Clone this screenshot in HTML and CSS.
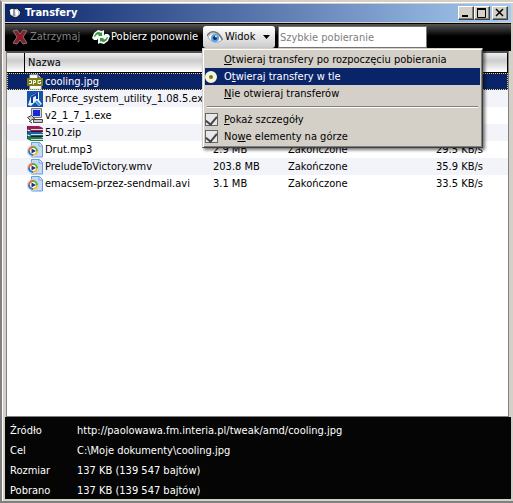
FILE: index.html
```
<!DOCTYPE html>
<html lang="pl">
<head>
<meta charset="utf-8">
<title>Transfery</title>
<link rel="stylesheet" href="styles.css">
</head>
<body>
<svg class="defs" aria-hidden="true">
  <symbol id="media" viewBox="0 0 16 16">
    <path d="M4.500 .5h8l3 3v11.500h-11z" fill="#c4dcf8" stroke="#6c9cdc"/>
    <path d="M12 1v3h3" fill="#fff" stroke="#6c9cdc"/>
    <circle cx="6" cy="9" r="5.700" fill="#fff" stroke="#a4b8d4" stroke-width=".6"/>
    <path d="M2 9a4 4 0 0 1 4-4" fill="none" stroke="#e8642c" stroke-width="2"/>
    <path d="M6 5a4 4 0 0 1 4 4" fill="none" stroke="#5cae3c" stroke-width="2"/>
    <path d="M10 9a4 4 0 0 1-4 4" fill="none" stroke="#f4b428" stroke-width="2"/>
    <path d="M6 13a4 4 0 0 1-4-4" fill="none" stroke="#2c74d4" stroke-width="2"/>
    <path d="M4.500 6.500L9 9l-4.500 2.500z" fill="#123c6c"/>
  </symbol>
</svg>
<main class="window">
  <header class="titlebar">
    <svg class="app-icon" viewBox="0 0 14 12" aria-hidden="true"><path d="M1 3l3-2 2 1 3-1 4 4-1 3-4 3-3-1-3-2z" fill="#c8ccd4" stroke="#101828"/><path d="M2 3l3-1v5l-2 1zM7 3l3 1v4l-2 1z" fill="#fff"/><path d="M6 3v6" stroke="#586070"/></svg>
    <h1>Transfery</h1>
    <div class="caption-buttons">
      <button type="button" aria-label="Minimalizuj"><svg viewBox="0 0 12 10"><path d="M2 8h6" stroke="#000" stroke-width="2"/></svg></button>
      <button type="button" aria-label="Maksymalizuj"><svg viewBox="0 0 12 10"><path d="M1.500 1v8.500h8V1" fill="none" stroke="#000"/><path d="M1 1h9" stroke="#000" stroke-width="2"/></svg></button>
      <button type="button" class="close" aria-label="Zamknij"><svg viewBox="0 0 12 10"><path d="M2 1l7 7M9 1L2 8" stroke="#000" stroke-width="1.500"/></svg></button>
    </div>
  </header>
  <div class="toolbar">
    <button type="button" class="tool stop" disabled><svg viewBox="0 0 16 16" aria-hidden="true"><path d="M1 2l4-1 3 4 3-4 4 1-4 6 4 6-4 1-3-4-3 4-4-1 4-6z" fill="#8c1c28" stroke="#777"/></svg><span>Zatrzymaj</span></button>
    <button type="button" class="tool again"><svg viewBox="0 0 18 16" aria-hidden="true"><path d="M0 9l2-5 4-3 4 1 2-1v7H7l-2 3H2zM18 7l-2 5-4 3-4-1-2 1V8h5l2-3h3z" fill="#f4faf4"/><path d="M2 8c1-5 5-6 7-4l1-1v4H6l1-1c-2-1-3 0-4 2zM16 8c-1 5-5 6-7 4l-1 1V9h4l-1 1c2 1 3 0 4-2z" fill="#3c9444"/></svg><span>Pobierz ponownie</span></button>
    <div class="view">
      <button type="button" class="view-button" aria-haspopup="menu" aria-expanded="true"><svg class="eye" viewBox="0 0 16 14" aria-hidden="true"><path d="M1 7c3-5 10-6 14 3-5 4-11 3-14-3z" fill="#fff" stroke="#a8a8b0"/><circle cx="8" cy="8" r="4" fill="#4ca4f0"/><circle cx="8" cy="8" r="2" fill="#103050"/><circle cx="9" cy="6.500" r="1" fill="#e0f4ff"/><path d="M0 6c4-7 12-5 15.500 4" fill="none" stroke="#777" stroke-width="1.500"/></svg><span>Widok</span><svg class="arrow" viewBox="0 0 7 4" aria-hidden="true"><path d="M0 0h7L3.500 4z"/></svg></button>
      <div class="menu" role="menu">
        <button type="button" role="menuitemradio" aria-checked="false"><span class="mark"></span><span><u>O</u>twieraj transfery po rozpoczęciu pobierania</span></button>
        <button type="button" role="menuitemradio" aria-checked="true" class="active"><span class="mark"><i class="radio"></i></span><span>O<u>t</u>wieraj transfery w tle</span></button>
        <button type="button" role="menuitemradio" aria-checked="false"><span class="mark"></span><span><u>N</u>ie otwieraj transferów</span></button>
        <hr>
        <label><span class="mark"><input type="checkbox" checked></span><span><u>P</u>okaż szczegóły</span></label>
        <label><span class="mark"><input type="checkbox" checked></span><span>No<u>w</u>e elementy na górze</span></label>
      </div>
    </div>
    <input class="quick" type="text" placeholder="Szybkie pobieranie" aria-label="Szybkie pobieranie">
  </div>
  <section class="list">
    <table>
      <colgroup><col class="c-icon"><col class="c-name"><col class="c-size"><col class="c-state"><col></colgroup>
      <thead><tr><th></th><th>Nazwa</th><th></th><th></th><th></th></tr></thead>
      <tbody>
        <tr class="selected"><td></td><td><div class="file"><svg viewBox="0 0 16 16" aria-hidden="true"><path d="M3 1h8l3 3v11H3z" fill="#fff" stroke="#ddd"/><path d="M11 1v3h3" fill="#ccc" stroke="#333"/><path d="M0 4h16v8H0z" fill="#7c8010"/><path d="M2 6.500h2.500v3H2M6.500 10.500v-4h2v2h-2M14 6.500h-3v3h2.500V8" fill="none" stroke="#fff"/></svg>cooling.jpg</div></td><td></td><td></td><td></td></tr>
        <tr><td></td><td><div class="file"><svg viewBox="0 0 16 16" aria-hidden="true"><path d="M0 0h16v16H0z" fill="#1454a8"/><path d="M1 14L4 5 12 1v8l3 4-3 2-4-4-4 4z" fill="#e4f4ff"/><path d="M5 12V6l5-3v5" fill="none" stroke="#1838a0" stroke-width="2"/><path d="M9 10l4 4" stroke="#3c94dc" stroke-width="2"/></svg>nForce_system_utility_1.08.5.exe</div></td><td></td><td></td><td></td></tr>
        <tr><td></td><td><div class="file"><svg viewBox="0 0 16 16" aria-hidden="true"><path d="M4.500 .5h10v9h-10z" fill="#d4d4d4" stroke="#777"/><path d="M6 2h7v6H6z" fill="#1828d8"/><path d="M.5 9.500l4-2 3 3-4 2zM6.500 11.500h9v3h-9z" fill="#ccc" stroke="#444"/><path d="M2 13l3 2" stroke="#222"/></svg>v2_1_7_1.exe</div></td><td></td><td></td><td></td></tr>
        <tr><td></td><td><div class="file"><svg viewBox="0 0 16 16" aria-hidden="true"><path d="M0 1h12l4 2v3H4L0 4z" fill="#a01858"/><path d="M0 6h12l4 2v3H4L0 9z" fill="#1860a0"/><path d="M0 11h12l4 2v3H4l-4-2z" fill="#188048"/><path d="M4 4.500h12M4 9.500h12M4 14.500h12" stroke="#ddd"/><path d="M4 6.500h12M4 11.500h12M0 1v13" stroke="#222"/></svg>510.zip</div></td><td></td><td></td><td></td></tr>
        <tr><td></td><td><div class="file"><svg aria-hidden="true"><use href="#media"/></svg>Drut.mp3</div></td><td>2.9 MB</td><td>Zakończone</td><td>29.5 KB/s</td></tr>
        <tr><td></td><td><div class="file"><svg aria-hidden="true"><use href="#media"/></svg>PreludeToVictory.wmv</div></td><td>203.8 MB</td><td>Zakończone</td><td>35.9 KB/s</td></tr>
        <tr><td></td><td><div class="file"><svg aria-hidden="true"><use href="#media"/></svg>emacsem-przez-sendmail.avi</div></td><td>3.1 MB</td><td>Zakończone</td><td>33.5 KB/s</td></tr>
      </tbody>
    </table>
  </section>
  <dl class="details">
    <dt>Źródło</dt><dd>http://paolowawa.fm.interia.pl/tweak/amd/cooling.jpg</dd>
    <dt>Cel</dt><dd>C:\Moje dokumenty\cooling.jpg</dd>
    <dt>Rozmiar</dt><dd>137 KB (139 547 bajtów)</dd>
    <dt>Pobrano</dt><dd>137 KB (139 547 bajtów)</dd>
  </dl>
</main>
</body>
</html>
```

FILE: styles.css
```
* { box-sizing: border-box; }
body, button, input {
  font: 11px/14px "DejaVu Sans Condensed", "Liberation Sans", sans-serif;
  color: #000;
}
body { margin: 0; background: #d4d0c8; }
button { padding: 0; border: 0; background: none; text-align: left; }
svg { display: block; flex: none; }
.defs { position: absolute; width: 0; height: 0; }

.window {
  display: flex;
  flex-direction: column;
  min-height: 100vh;
  padding: 2px 2px 2px 3px;
  border: 2px solid;
  border-color: #d4d0c8 #d4d0c8 #808080 #808080;
  border-right-width: 0;
  background: #d4d0c8;
  box-shadow: inset 1px 1px #fff;
}

.titlebar {
  display: flex;
  align-items: center;
  gap: 3px;
  height: 18px;
  margin-bottom: 1px;
  padding: 0 3px;
  background: linear-gradient(90deg, #0a246a, #a6caf0);
}
.app-icon { width: 14px; height: 12px; }
h1 { flex: 1; margin: 0; font-size: 11px; line-height: 14px; color: #fff; }
.caption-buttons { display: flex; }
.caption-buttons button {
  width: 16px;
  height: 14px;
  padding: 1px;
  border: 1px solid;
  border-color: #fff #404040 #404040 #fff;
  background: #d4d0c8;
  box-shadow: inset -1px -1px #808080;
}
.caption-buttons svg { width: 12px; height: 10px; }
.caption-buttons .close { margin-left: 2px; }

.toolbar {
  display: flex;
  height: 28px;
  padding: 2px 2px 0 7px;
  border-top: 1px solid #000;
  background: linear-gradient(#555, #000 12px);
}
.tool { display: flex; align-items: center; gap: 2px; height: 22px; color: #fff; white-space: nowrap; }
.tool svg { width: 18px; height: 16px; }
.tool.stop { width: 68px; margin-right: 12px; color: #808080; }
.tool.stop svg { width: 16px; }
.tool.again { width: 111px; gap: 1px; }
.view { position: relative; }
.view-button {
  display: flex;
  align-items: center;
  gap: 2px;
  width: 72px;
  height: 22px;
  padding-left: 4px;
  border-radius: 3px;
  background: linear-gradient(#fff, #ccc);
}
.eye { width: 16px; height: 14px; }
.arrow { width: 7px; height: 4px; margin-left: 6px; }
.quick {
  width: 149px;
  height: 22px;
  margin-left: 3px;
  padding: 0 1px;
  border: 1px solid #777;
  background: #fff;
}
.quick::placeholder { color: #808080; opacity: 1; }

.menu {
  position: absolute;
  z-index: 1;
  top: 22px;
  left: -1px;
  width: 281px;
  padding: 2px;
  border: 1px solid;
  border-color: #d4d0c8 #404040 #404040 #d4d0c8;
  background: #d4d0c8;
  box-shadow: inset 1px 1px #fff, inset -1px -1px #808080, 2px 2px 3px #0008;
}
.menu button, .menu label { display: flex; align-items: center; width: 100%; height: 17px; white-space: nowrap; }
.mark { flex: none; width: 19px; }
.menu .active { color: #fff; background: #0a246a; }
.radio {
  display: block;
  width: 12px;
  height: 12px;
  border: 4px solid #f4f4dc;
  border-radius: 50%;
  background: #777720;
}
.menu hr { height: 2px; margin: 4px 2px 3px; border: 0; border-top: 1px solid #808080; background: #fff; }
.menu input {
  appearance: none;
  display: block;
  width: 13px;
  height: 13px;
  margin: 0;
  border: 1px solid #666;
  background: #e8e8e8;
}
.menu input:checked::before {
  content: "";
  display: block;
  width: 5px;
  height: 9px;
  margin: 0 auto;
  border: solid #444;
  border-width: 0 2px 2px 0;
  transform: rotate(40deg);
}

.list {
  flex: 1;
  margin: 0 2px 0 1px;
  border: 1px solid #808080;
  border-top: 2px solid #505050;
  background: #fff;
}
table { width: 100%; table-layout: fixed; border-collapse: separate; border-spacing: 0; }
.c-icon { width: 18px; }
.c-name { width: 186px; }
.c-size { width: 75px; }
.c-state { width: 148px; }
th, td { padding: 0 2px; text-align: left; font-weight: normal; white-space: nowrap; }
th {
  height: 20px;
  padding-left: 3px;
  border: solid #000;
  border-width: 0 1px 1px 0;
  background: linear-gradient(#eee, #ccc 40%, #fff);
}
td { height: 17px; }
td:first-child { padding: 0; }
.file { display: flex; align-items: center; gap: 2px; height: 17px; }
.file svg { width: 16px; height: 16px; }
tbody tr:nth-child(even) { background: #f3f4f9; }
tbody .selected { color: #fff; background: #0a246a; outline: 1px dotted #f0d060; outline-offset: -1px; }

.details {
  display: grid;
  grid-template-columns: 67px 1fr;
  align-content: start;
  grid-auto-rows: 20px;
  margin: 0;
  padding: 2px 5px 0;
  line-height: 24px;
  color: #fff;
  background: #050505;
}
.details dd { margin: 0; }
```
